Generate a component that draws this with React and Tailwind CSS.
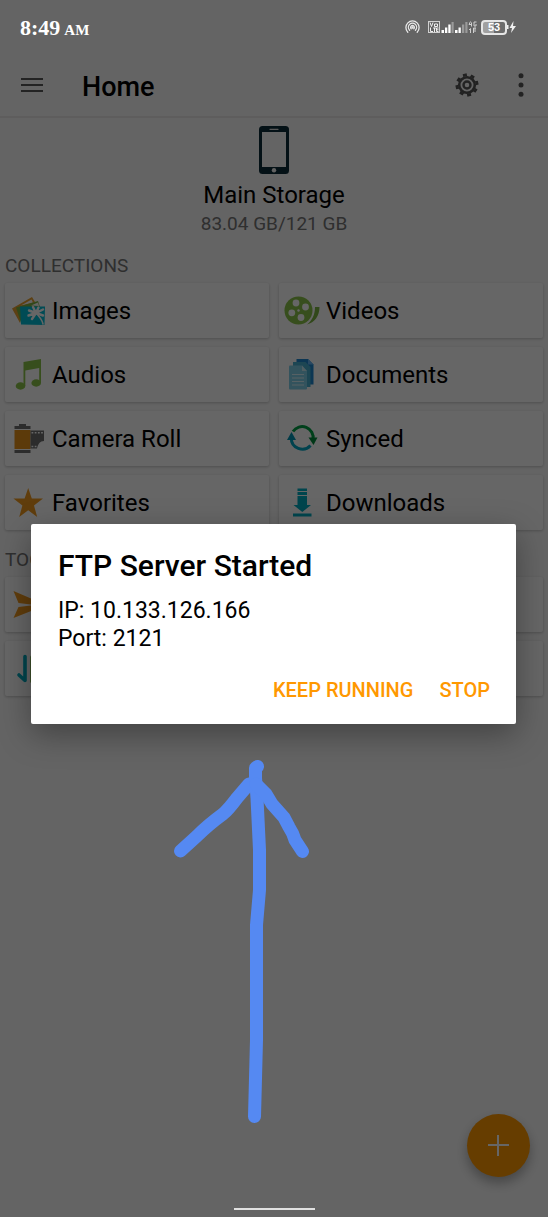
import React from "react";

const ImagesIcon = () => (
  <svg viewBox="0 0 34 34" className="size-[34px]" aria-hidden="true">
    <path d="M1 14.500 21 3l3 5-15 8v13z" fill="#e8a030" />
    <path d="M10 11.500 20.500 5.500l1.500 3z" fill="#fafafa" />
    <path d="M5 13.500 27 7l2 6-19 2v14z" fill="#7cb342" />
    <path d="M20 11.500 27 8.500l1 3.500z" fill="#fafafa" />
    <path d="M9 12.500h25l-.5 18.500L10 30.500z" fill="#00bcd4" />
    <g stroke="#fff" fill="none" strokeLinecap="round">
      <path d="M25 19 18 16.500M25 19l-7.500 2.500M25 19l-3-6M25 19l2.500-5.500M25 19l7-3.500M25 19l7 2.500M25 19l-4 6" strokeWidth="2.400" />
      <path d="M25 19c3 3 6 6.500 7 11" strokeWidth="1.600" />
    </g>
  </svg>
);

const VideosIcon = () => (
  <svg viewBox="0 0 34 34" className="size-[34px] overflow-visible" aria-hidden="true">
    <circle cx="13.500" cy="16.500" r="14" fill="#8bc34a" />
    <g fill="#fff">
      <circle cx="11" cy="9" r="3.400" />
      <circle cx="20.500" cy="13" r="3.400" />
      <circle cx="6.800" cy="18.800" r="3.400" />
      <circle cx="16" cy="23.500" r="3.400" />
      <circle cx="13.500" cy="16.500" r="1.200" />
    </g>
    <path d="M30 13h4.500c0 9-5 15.500-12.500 17.500 5-4 8-9.500 8-17.500z" fill="#7cb342" />
  </svg>
);

const AudiosIcon = () => (
  <svg viewBox="0 0 34 34" className="size-[34px]" aria-hidden="true">
    <path d="M12.500 4 30 1v24h-1.800V10L14.300 12.500V28h-1.800z" fill="#8bc34a" />
    <ellipse cx="9.500" cy="28" rx="4.800" ry="3.700" fill="#8bc34a" />
    <ellipse cx="25.200" cy="25" rx="4.800" ry="3.700" fill="#8bc34a" />
  </svg>
);

const DocumentsIcon = () => (
  <svg viewBox="0 0 34 34" className="size-[34px]" aria-hidden="true">
    <path d="M11.500 1H23l5.500 5.500v20h-17z" fill="#1e88d0" />
    <path d="M23 1l5.500 5.500H23z" fill="#64b5f6" />
    <path d="M8 4h12.500l5 5v20H8z" fill="#4aaed0" />
    <path d="M4 8.500Q4 7.500 5 7.500h12l5 5.500v17.500q0 1-1 1H5q-1 0-1-1z" fill="#81cfe8" />
    <path d="M17 7.500V13h5z" fill="#c5eaf6" />
    <path d="M7 16.500h12M7 20h12M7 23.500h12M7 27h12" stroke="#d8f2fa" strokeWidth="1.200" />
  </svg>
);

const CameraRollIcon = () => (
  <svg viewBox="0 0 34 34" className="size-[34px]" aria-hidden="true">
    <path d="M8 2h7v2h4.500v3h-16V4H8zM3.500 28h16v3h-16z" fill="#6e6e6e" />
    <path d="M3.500 8h16v19h-16z" fill="#e6921a" />
    <path d="M19.500 8.500H33V19c-4 0-6 3-7 7.500h-6.500z" fill="#6e6e6e" />
    <path d="M20.500 10.800H32" stroke="#fff" strokeWidth="1.600" strokeDasharray="1.800 1.400" />
    <path d="M20.500 24.500h5" stroke="#fff" strokeWidth="1.600" strokeDasharray="1.800 1.400" />
  </svg>
);

const StarIcon = () => (
  <svg viewBox="0 0 34 34" className="size-[34px]" aria-hidden="true">
    <path d="M17.200 2l3.600 10.600H32l-9 6.900L26.200 31l-9-6.800L8.200 31l3.200-11.500-9-6.900h11.200z" fill="#f09a20" />
  </svg>
);

const SyncedIcon = () => (
  <svg viewBox="0 0 34 34" className="size-[34px]" aria-hidden="true">
    <g fill="none" strokeWidth="3">
      <path d="M8 9.500a11 11 0 0 1 20 8" stroke="#00a045" />
      <path d="M25.500 23.500A11 11 0 0 1 6.300 16" stroke="#00a5c4" />
    </g>
    <path d="M23.500 15.500h9l-4 7.500z" fill="#008a3a" />
    <path d="M2 18h9L6.500 10z" fill="#0095b5" />
  </svg>
);

const DownloadsIcon = () => (
  <svg viewBox="0 0 34 34" className="size-[34px]" aria-hidden="true">
    <path d="M12.500 2.500h9.500V5h-9.500zM12.500 6h9.500v3h-9.500zM12.500 10h9.500v9h4l-8.700 7L8.500 19h4zM8 27.500h18.500v3H8z" fill="#00acc1" />
  </svg>
);

const SendIcon = () => (
  <svg viewBox="0 0 34 34" className="size-[34px]" aria-hidden="true">
    <path d="M2.500 3 34 16.500H20L7.500 15zM2.500 30 34 17.500H20L7.500 19z" fill="#f09a20" />
  </svg>
);

const TransferIcon = () => (
  <svg viewBox="0 0 34 34" className="size-[34px]" aria-hidden="true">
    <path d="M14 4.500V28.500l-6-5.500" fill="none" stroke="#00acc1" strokeWidth="3.600" strokeLinecap="round" strokeLinejoin="round" />
    <path d="M21 29.500V5l6 5.500" fill="none" stroke="#7cb342" strokeWidth="3.600" strokeLinecap="round" strokeLinejoin="round" />
  </svg>
);

const collections = [
  ["Images", ImagesIcon],
  ["Videos", VideosIcon],
  ["Audios", AudiosIcon],
  ["Documents", DocumentsIcon],
  ["Camera Roll", CameraRollIcon],
  ["Synced", SyncedIcon],
  ["Favorites", StarIcon],
  ["Downloads", DownloadsIcon],
];

function Tile({ label, Icon }) {
  return (
    <button
      type="button"
      className="flex h-[55px] items-center gap-[7px] rounded-xs bg-white pl-[6px] text-left text-2xl text-black shadow-[0_1px_3px_rgba(0,0,0,0.22)]"
    >
      {Icon && <Icon />}
      {label}
    </button>
  );
}

function Section({ title, children }) {
  return (
    <section className="px-[5px] pt-[18px]">
      <h2 className="mb-[5px] text-[19px] leading-6 text-[#757575]">{title}</h2>
      <div className="grid grid-cols-2 gap-x-[10px] gap-y-[9px]">{children}</div>
    </section>
  );
}

function StatusBar() {
  return (
    <div className="relative z-20 flex h-[54px] items-center justify-between pr-8 pl-5 text-white">
      <div className="flex items-baseline gap-1 font-['Liberation_Serif',serif] font-bold">
        <span className="text-[22px]">8:49</span>
        <span className="text-[15px]">AM</span>
      </div>
      <div className="flex items-center">
        <svg viewBox="0 0 15 14" className="mr-2 h-[14px] w-[15px]" fill="none" stroke="#e8e8e8" strokeWidth="1.300" strokeLinecap="round" aria-hidden="true">
          <path d="M2.800 12.200a6.600 6.600 0 1 1 9.400 0M4.600 10.200a4.100 4.100 0 1 1 5.800 0M6.200 8.800a1.900 1.900 0 1 1 2.600 0" />
          <circle cx="7.500" cy="7.500" r=".6" fill="#e8e8e8" />
        </svg>
        <svg viewBox="0 0 49 14" className="mr-[4px] h-[14px] w-[49px]" aria-hidden="true">
          <rect x=".5" y="1.500" width="11" height="11" fill="none" stroke="#d0d0d0" />
          <g fill="none" stroke="#f0f0f0" strokeWidth="1">
            <path d="M2 2.500 3.500 6.500 5 2.500M6.500 4h3v2.500h-3zM2.500 7.500v4H5M5 8h3M6.500 8v4M10.500 8H8.500v3.500h2M8.500 9.800h2" />
            <path d="M42.500 1.500 41 4.500h3M43.500 2.500v4M48.500 2h-2.500v4h2V4M42.500 13V8.500M41 10l1.500-1.500M45.500 13V8h2.500M47 8v4" stroke="#cfcfcf" />
          </g>
          <g fill="#fff">
            <path d="M13.500 10H16v3h-2.500zM17 7.500h2.300V13H17zM20.300 4.500h2.300V13h-2.300zM27 10h2.500v3H27zM30.500 7.500h2.300V13h-2.300z" />
            <path d="M23.500 2h2.200v11h-2.200zM34 4.500h2.300V13H34zM37.300 2h2.200v11h-2.200z" opacity=".35" />
          </g>
        </svg>
        <span className="flex h-[15px] w-[26px] items-center justify-center rounded-[4px] border-2 border-[#e6e6e6] bg-gradient-to-r from-[#a0a0a0] from-50% to-[#6c6c6c] to-50% font-['Liberation_Sans',sans-serif] text-[11px] leading-none font-bold">
          53
        </span>
        <svg viewBox="0 0 9 14" className="h-[14px] w-[9px]" fill="#f0f0f0" aria-hidden="true">
          <path d="M0 5h1.500v4H0zM6.500 1 2.500 8H5l-1 5 5-7H6z" />
        </svg>
      </div>
    </div>
  );
}

export default function App() {
  return (
    <div className="relative flex min-h-screen flex-col overflow-hidden bg-[#fafafa] font-['Roboto',sans-serif]">
      <StatusBar />
      <header className="flex h-[64px] items-center border-b-2 border-[#ebe8e8] pr-[15px] pl-5">
        <button type="button" aria-label="Menu" className="mr-[38px]">
          <svg viewBox="0 0 24 18" className="h-[18px] w-6" stroke="#595959" strokeWidth="2" aria-hidden="true">
            <path d="M1 3h22M1 9h22M1 15h22" />
          </svg>
        </button>
        <h1 className="flex-1 pt-1 text-[27px] leading-8 font-medium text-black">Home</h1>
        <button type="button" aria-label="Settings" className="mr-[30px]">
          <svg viewBox="0 0 24 24" className="size-6" fill="none" stroke="#555" aria-hidden="true">
            <circle cx="12" cy="12" r="7.800" strokeWidth="2.600" />
            <circle cx="12" cy="12" r="3.500" strokeWidth="2.400" />
            <path
              d="M20.500 12h3M18 18l2 2M12 20.500v3M6 18l-2 2M3.500 12h-3M6 6 4 4M12 3.500v-3M18 6l2-2"
              strokeWidth="4"
              transform="rotate(-12 12 12)"
            />
          </svg>
        </button>
        <button type="button" aria-label="More options">
          <svg viewBox="0 0 24 24" className="size-6" fill="#555" aria-hidden="true">
            <circle cx="12" cy="2.800" r="2.500" />
            <circle cx="12" cy="12" r="2.500" />
            <circle cx="12" cy="21.200" r="2.500" />
          </svg>
        </button>
      </header>

      <main className="flex-1">
        <div className="flex flex-col items-center pt-2">
          <svg viewBox="0 0 30 48" className="h-12 w-[30px]" aria-hidden="true">
            <rect width="30" height="48" rx="3.500" fill="#0b2c38" />
            <path d="M3 6h24v35H3z" fill="#fafafa" />
            <path d="M11 3.300h8" stroke="#ddd" strokeWidth="1.300" strokeLinecap="round" />
            <circle cx="15" cy="44.300" r="2.200" fill="#f5f5f5" />
          </svg>
          <p className="mt-[7px] text-2xl leading-7 text-black">Main Storage</p>
          <p className="mt-[3px] text-[19px] leading-6 text-[#757575]">83.04 GB/121 GB</p>
        </div>
        <Section title="COLLECTIONS">
          {collections.map(([label, Icon]) => (
            <Tile key={label} label={label} Icon={Icon} />
          ))}
        </Section>
        <Section title="TOOLS">
          <Tile Icon={SendIcon} />
          <Tile />
          <Tile Icon={TransferIcon} />
          <Tile />
        </Section>
      </main>

      <button
        type="button"
        aria-label="Add"
        className="absolute right-[18px] bottom-10 flex size-[63px] items-center justify-center rounded-full bg-[#ff9800] shadow-[0_6px_12px_rgba(0,0,0,0.3)]"
      >
        <svg viewBox="0 0 21 21" className="size-[21px]" stroke="#fff" strokeWidth="2" aria-hidden="true">
          <path d="M10 0v21M0 10h21" />
        </svg>
      </button>

      <div className="absolute inset-0 z-10 flex items-center bg-black/60 pt-[54px] pr-8 pb-6 pl-[31px]">
        <div
          role="dialog"
          aria-labelledby="dialog-title"
          className="w-full rounded-xs bg-white pt-6 pr-[26px] pb-5 pl-[27px] text-black shadow-[0_10px_32px_rgba(0,0,0,0.35)]"
        >
          <h2 id="dialog-title" className="text-[30px] leading-9 font-medium">FTP Server Started</h2>
          <p className="mt-[13px] text-[23px] leading-7">
            IP: 10.133.126.166
            <br />
            Port: 2121
          </p>
          <div className="mt-[23px] flex justify-end gap-[26px] text-xl leading-7 font-medium text-[#ff9800]">
            <button type="button">KEEP RUNNING</button>
            <button type="button">STOP</button>
          </div>
        </div>
      </div>

      <svg
        viewBox="174 758 136 366"
        className="absolute top-[758px] left-[174px] z-20 h-[366px] w-[136px]"
        fill="none"
        stroke="#5589f2"
        strokeWidth="13"
        strokeLinecap="round"
        strokeLinejoin="round"
        aria-hidden="true"
      >
        <path d="M257.500 766.500 255.500 768V778L257 798 259.500 850V890L256.500 925V1040L254.500 1116.500" />
        <path d="M180.500 851 197 836Q208 825 223 814Q228 810 237 798L249 784" />
        <path d="M256 784 266 794Q269 799 272 804L284 817.500 289 827Q293 833 295 840L302.500 851.500" />
      </svg>

      <div className="absolute inset-x-0 bottom-[7px] z-20 flex justify-center">
        <div className="h-[2px] w-[81px] bg-[#e0e0e0]" />
      </div>
    </div>
  );
}
